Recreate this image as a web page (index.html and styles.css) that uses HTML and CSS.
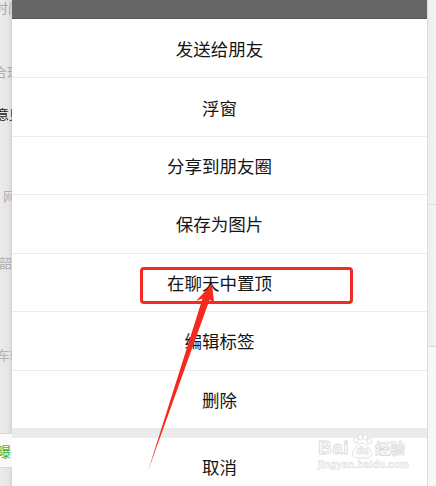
FILE: index.html
```html
<!DOCTYPE html>
<html lang="zh-CN">
<head>
<meta charset="utf-8">
<title>菜单</title>
<link rel="stylesheet" href="styles.css">
</head>
<body>
<div class="page">
  <aside class="left">
    <div class="frag f1">时间</div>
    <div class="frag f2">合现</div>
    <div class="frag f3">意见</div>
    <div class="frag f4">网</div>
    <div class="frag f5">韶</div>
    <div class="frag f6">车辆</div>
    <div class="green-row"><span>曝光</span></div>
  </aside>
  <main class="sheet">
    <div class="topbar"></div>
    <div class="menu">
      <div class="item">发送给朋友</div>
      <div class="item">浮窗</div>
      <div class="item">分享到朋友圈</div>
      <div class="item">保存为图片</div>
      <div class="item">在聊天中置顶</div>
      <div class="item">编辑标签</div>
      <div class="item">删除</div>
    </div>
    <div class="sep"></div>
    <div class="item cancel">取消</div>
  </main>
  <aside class="right">
    <div class="r1"></div>
    <div class="r2"></div>
    <div class="r3"></div>
  </aside>

  <div class="highlight"></div>
  <svg class="arrow" width="436" height="486" viewBox="0 0 436 486">
    <polygon points="212,284 214,302 209.5,300 148,471 202.5,298.5 196,301" fill="#f52a1f"/>
  </svg>
  <div class="watermark">
    <div class="wm-top">
      <span class="wm-bai">Bai</span>
      <svg class="wm-paw" width="24" height="26" viewBox="0 0 24 26">
        <g fill="#fcfcfc" stroke="#dedede" stroke-width="0.9">
          <ellipse cx="6" cy="7" rx="2.3" ry="3"/>
          <ellipse cx="10.5" cy="4" rx="2.3" ry="3"/>
          <ellipse cx="15.5" cy="4" rx="2.3" ry="3"/>
          <ellipse cx="19.5" cy="8" rx="2.3" ry="3"/>
          <path d="M12 10c4 0 7 5 9 8 2 3 0 7-4 7H7c-4 0-6-4-4-7 2-3 5-8 9-8z"/>
        </g>
        <text x="12.5" y="21" text-anchor="middle" class="wm-du">du</text>
      </svg>
      <span class="wm-jy">经验</span>
    </div>
    <div class="wm-url">jingyan.baidu.com</div>
  </div>
</div>
</body>
</html>
```

FILE: styles.css
```css
* { box-sizing: border-box; margin: 0; padding: 0; }

html, body {
  width: 436px;
  height: 486px;
  overflow: hidden;
  background: #ffffff;
}

body {
  font-family: "Noto Sans CJK SC", "Noto Sans", "Liberation Sans", sans-serif;
}

.page {
  position: relative;
  display: flex;
  width: 436px;
  height: 486px;
  overflow: hidden;
}

/* left background fragment */
.left {
  width: 12px;
  flex: none;
  overflow: hidden;
  background: linear-gradient(to right, #ecebeb 0%, #e6e4e4 70%, #d6d4d4 100%);
  display: flex;
  flex-direction: column;
}

.frag {
  height: 16px;
  line-height: 16px;
  font-size: 13px;
  white-space: nowrap;
  color: #b4b0b0;
}

.f1 { margin-left: -5px; color: #a9a3a3; }
.f2 { margin-top: 48px; margin-left: -6px; color: #aeaaaa; }
.f3 { margin-top: 26px; margin-left: -4px; color: #1a1a1a; }
.f4 { margin-top: 66px; margin-left: 3px; color: #b8b0b0; }
.f5 { margin-top: 51px; margin-left: -1px; color: #b0acac; }
.f6 { margin-top: 76px; margin-left: -3px; color: #b4b2b2; }

.green-row {
  margin-top: 70px;
  height: 35px;
  border-top: 1px solid #d8d8d8;
  border-bottom: 1px solid #d8d8d8;
  background: #fafafa;
  display: flex;
  align-items: center;
  white-space: nowrap;
  font-size: 14px;
  color: #3fb33a;
}

.green-row span { margin-left: -3px; }

/* bottom sheet */
.sheet {
  width: 415px;
  flex: none;
  background: #ffffff;
  display: flex;
  flex-direction: column;
}

.topbar {
  height: 19px;
  flex: none;
  background: #666666;
  border-bottom: 1px solid #5a5a5a;
}

.menu {
  display: flex;
  flex-direction: column;
}

.item {
  height: 58.43px;
  flex: none;
  display: flex;
  align-items: center;
  justify-content: center;
  font-size: 17.5px;
  color: #151515;
  letter-spacing: 0;
}

.item + .item {
  border-top: 1px solid #ececec;
}

.sep {
  height: 10px;
  flex: none;
  background: #ebebeb;
}

.cancel {
  height: 58px;
}

/* right background fragment */
.right {
  width: 9px;
  flex: none;
  border-left: 1px solid #dcdcdc;
  display: flex;
  flex-direction: column;
}

.r1 {
  height: 205px;
  background: linear-gradient(to right, #eeeeee, #f2f2f2);
  border-bottom: 1px solid #dedede;
}

.r2 {
  height: 142px;
  background: linear-gradient(to right, #eeeeee, #f3f3f3);
  border-bottom: 1px solid #d6d6d6;
}

.r3 {
  flex: 1;
  background: #f7f7f7;
}

/* annotations */
.highlight {
  position: absolute;
  left: 140px;
  top: 267px;
  width: 213px;
  height: 37px;
  border: 3px solid #f22a22;
  border-radius: 4px;
}

.arrow {
  position: absolute;
  left: 0;
  top: 0;
  pointer-events: none;
}

.watermark {
  position: absolute;
  left: 318px;
  top: 430px;
  display: flex;
  flex-direction: column;
  align-items: flex-start;
  font-family: "Liberation Sans", "Noto Sans CJK SC", sans-serif;
}

.wm-top {
  display: flex;
  align-items: flex-end;
  height: 28px;
}

.wm-bai {
  font-size: 19px;
  font-weight: bold;
  line-height: 20px;
  color: #fcfcfc;
  -webkit-text-stroke: 0.8px #dadada;
  letter-spacing: 0.5px;
}

.wm-paw {
  margin-left: 1px;
  margin-bottom: -1px;
}

.wm-du {
  font-family: "Liberation Sans", sans-serif;
  font-size: 10px;
  font-weight: bold;
  fill: #fcfcfc;
  stroke: #d8d8d8;
  stroke-width: 0.5;
}

.wm-jy {
  font-family: "Noto Sans CJK SC", sans-serif;
  font-size: 15px;
  font-weight: bold;
  line-height: 20px;
  margin-left: 1px;
  color: #fcfcfc;
  -webkit-text-stroke: 0.7px #d8d8d8;
}

.wm-url {
  margin-top: 1px;
  font-size: 10px;
  line-height: 12px;
  font-weight: bold;
  color: #fcfcfc;
  -webkit-text-stroke: 0.5px #dcdcdc;
  letter-spacing: 0.2px;
}
```
